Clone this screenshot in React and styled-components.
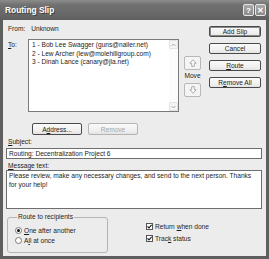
import React from 'react';
import styled, { createGlobalStyle } from 'styled-components';

const Global = createGlobalStyle`
  html, body { margin: 0; padding: 0; background: #fff; }
  body { width: 269px; height: 259px; overflow: hidden; }
  * { box-sizing: border-box; }
`;

const Win = styled.div`
  width: 269px;
  height: 259px;
  display: flex;
  flex-direction: column;
  background: #5e5e5e;
  font-family: "Liberation Sans", Arial, sans-serif;
  font-size: 6.6px;
  color: #1c1c1c;
`;

const TitleBar = styled.div`
  height: 20px;
  flex: none;
  display: flex;
  align-items: center;
  padding: 0 3px 0 5px;
  background: linear-gradient(#8c8c8c, #707070 25%, #686868 70%, #5e5e5e);
  color: #fff;
  font-weight: bold;
  font-size: 8.4px;
`;

const Title = styled.span`
  flex: 1;
  text-shadow: 1px 1px 0 #444;
`;

const CapBtn = styled.div`
  width: 11px;
  height: 12px;
  margin-left: 1px;
  border: 1px solid #e8e8e8;
  border-radius: 2px;
  background: linear-gradient(#a8a8a8, #8a8a8a);
  color: #fff;
  font-size: 8px;
  font-weight: bold;
  display: flex;
  align-items: center;
  justify-content: center;
`;

const Body = styled.div`
  flex: 1;
  margin: 0 3px 3px 3px;
  background: #ececec;
  padding: 0 4px 0 3px;
  display: flex;
  flex-direction: column;
`;

const Top = styled.div`
  display: flex;
  align-items: flex-start;
`;

const LeftCol = styled.div`
  width: 195px;
  display: flex;
  flex-direction: column;
`;

const Line = styled.div`
  height: 9px;
  line-height: 9px;
  padding-left: 2px;
  margin-top: ${p => p.$mt || 0}px;
  white-space: nowrap;
`;

const Gap = styled.span`
  display: inline-block;
  width: ${p => p.$w}px;
`;

const ToRow = styled.div`
  display: flex;
  margin-top: 6px;
  align-items: flex-start;
`;

const ToLabel = styled.div`
  width: 22px;
  padding: 1px 0 0 2px;
  line-height: 9px;
`;

const ListBox = styled.div`
  width: 151px;
  height: 73px;
  background: #fff;
  border: 1px solid #7a7a7a;
  display: flex;
`;

const ListItems = styled.div`
  flex: 1;
  padding: 1px 0 0 3px;
  line-height: 8.5px;
  white-space: nowrap;
  overflow: hidden;
`;

const ScrollCol = styled.div`
  width: 9px;
  display: flex;
  flex-direction: column;
  justify-content: space-between;
  background: #fbfbfb;
`;

const ScrollBtn = styled.div`
  height: 9px;
  border: 1px solid #e2e2e2;
  border-radius: 1px;
  background: #f4f4f4;
  display: flex;
  align-items: center;
  justify-content: center;
`;

const MoveCol = styled.div`
  margin-left: 5px;
  width: 17px;
  padding-top: 17px;
  display: flex;
  flex-direction: column;
  align-items: center;
`;

const ArrowBtn = styled.div`
  width: 17px;
  height: 14px;
  border: 1px solid #b8b8b8;
  border-radius: 2px;
  background: #f4f4f4;
  display: flex;
  align-items: center;
  justify-content: center;
`;

const MoveLabel = styled.div`
  height: 13px;
  line-height: 10px;
  padding-top: 1px;
`;

const ActionRow = styled.div`
  display: flex;
  gap: 6px;
  margin-top: 11px;
  padding-left: 26px;
`;

const Btn = styled.div`
  width: ${p => p.$w || 52}px;
  height: ${p => p.$h || 11}px;
  border: 1px solid ${p => (p.$disabled ? '#b4b4b4' : '#4a4a4a')};
  border-radius: 2px;
  background: linear-gradient(#fafafa, #efefef 70%, #e2e2e2);
  color: ${p => (p.$disabled ? '#a6a6a6' : '#1c1c1c')};
  display: flex;
  align-items: center;
  justify-content: center;
  white-space: nowrap;
  box-shadow: ${p => (p.$default ? 'inset 0 0 0 1px #8a8a8a' : 'none')};
`;

const RightCol = styled.div`
  margin-left: auto;
  margin-right: 1px;
  margin-top: 6px;
  display: flex;
  flex-direction: column;
  gap: 6px;
`;

const Field = styled.div`
  margin-top: ${p => p.$mt || 0}px;
  height: ${p => p.$h}px;
  background: #fff;
  border: 1px solid #6e6e6e;
  padding: 0 2px;
  line-height: ${p => p.$lh || 9}px;
  overflow: hidden;
  white-space: nowrap;
`;

const Bottom = styled.div`
  display: flex;
  margin-top: 4px;
  align-items: flex-start;
`;

const Group = styled.fieldset`
  margin: 0 0 0 1px;
  width: 101px;
  height: 40px;
  border: 1px solid #b4b4b4;
  border-radius: 3px;
  padding: 4px 0 0 7px;
`;

const Legend = styled.legend`
  padding: 0 1px;
  margin-left: 2px;
  line-height: 8px;
`;

const OptRow = styled.div`
  display: flex;
  align-items: center;
  height: 10px;
  gap: 2px;
  white-space: nowrap;
`;

const Radio = styled.span`
  width: 7px;
  height: 7px;
  border-radius: 50%;
  border: 1px solid #7a7a7a;
  background: #fff;
  display: flex;
  align-items: center;
  justify-content: center;
  &::after {
    content: "";
    width: 3px;
    height: 3px;
    border-radius: 50%;
    background: ${p => (p.$on ? '#111' : 'transparent')};
  }
`;

const Checks = styled.div`
  margin-left: 38px;
  padding-top: 8px;
  display: flex;
  flex-direction: column;
  gap: 2px;
`;

const Box = styled.span`
  width: 7px;
  height: 7px;
  border: 1px solid #555;
  background: #fff;
  display: flex;
  align-items: center;
  justify-content: center;
`;

const Up = () => (
  <svg width="8" height="8" viewBox="0 0 8 8">
    <path d="M4 0.8 L7.2 4.2 H5.3 V7.3 H2.7 V4.2 H0.8 Z" fill="#fff" stroke="#9a9a9a" strokeWidth="0.8" />
  </svg>
);
const Down = () => (
  <svg width="8" height="8" viewBox="0 0 8 8">
    <path d="M4 7.2 L7.2 3.8 H5.3 V0.7 H2.7 V3.8 H0.8 Z" fill="#fff" stroke="#9a9a9a" strokeWidth="0.8" />
  </svg>
);
const Chev = ({ up }) => (
  <svg width="5" height="4" viewBox="0 0 5 4">
    <path d={up ? 'M0.5 3 L2.5 1 L4.5 3' : 'M0.5 1 L2.5 3 L4.5 1'} fill="none" stroke="#a0a0a0" strokeWidth="0.9" />
  </svg>
);
const Tick = () => (
  <svg width="5" height="5" viewBox="0 0 5 5">
    <path d="M0.5 2.4 L2 4 L4.6 0.8" fill="none" stroke="#111" strokeWidth="1.1" />
  </svg>
);

export default function App() {
  return (
    <>
      <Global />
      <Win>
        <TitleBar>
          <Title>Routing Slip</Title>
          <CapBtn>?</CapBtn>
          <CapBtn>✕</CapBtn>
        </TitleBar>
        <Body>
          <Top>
            <LeftCol>
              <Line $mt={4}>From:<Gap $w={6} />Unknown</Line>
              <ToRow>
                <ToLabel><u>T</u>o:</ToLabel>
                <ListBox>
                  <ListItems>
                    <div>1 - Bob Lee Swagger (guns@nailer.net)</div>
                    <div>2 - Lew Archer (lew@molehillgroup.com)</div>
                    <div>3 - Dinah Lance (canary@jla.net)</div>
                  </ListItems>
                  <ScrollCol>
                    <ScrollBtn><Chev up /></ScrollBtn>
                    <ScrollBtn><Chev /></ScrollBtn>
                  </ScrollCol>
                </ListBox>
                <MoveCol>
                  <ArrowBtn><Up /></ArrowBtn>
                  <MoveLabel>Move</MoveLabel>
                  <ArrowBtn><Down /></ArrowBtn>
                </MoveCol>
              </ToRow>
              <ActionRow>
                <Btn $w={50} $h={12}>A<u>d</u>dress...</Btn>
                <Btn $w={50} $h={12} $disabled>Remove</Btn>
              </ActionRow>
            </LeftCol>
            <RightCol>
              <Btn $default>Add Slip</Btn>
              <Btn>Cancel</Btn>
              <Btn><u>R</u>oute</Btn>
              <Btn>R<u>e</u>move All</Btn>
            </RightCol>
          </Top>
          <Line $mt={2}><u>S</u>ubject:</Line>
          <Field $mt={2} $h={11}>Routing: Decentralization Project 6</Field>
          <Line $mt={2}><u>M</u>essage text:</Line>
          <Field $h={39} $lh={9}>
            Please review, make any necessary changes, and send to the next person. Thanks
            <br />
            for your help!
          </Field>
          <Bottom>
            <Group>
              <Legend>Route to recipients</Legend>
              <OptRow><Radio $on /><span><u>O</u>ne after another</span></OptRow>
              <OptRow><Radio /><span>A<u>l</u>l at once</span></OptRow>
            </Group>
            <Checks>
              <OptRow><Box><Tick /></Box><span>Return <u>w</u>hen done</span></OptRow>
              <OptRow><Box><Tick /></Box><span>Trac<u>k</u> status</span></OptRow>
            </Checks>
          </Bottom>
        </Body>
      </Win>
    </>
  );
}
